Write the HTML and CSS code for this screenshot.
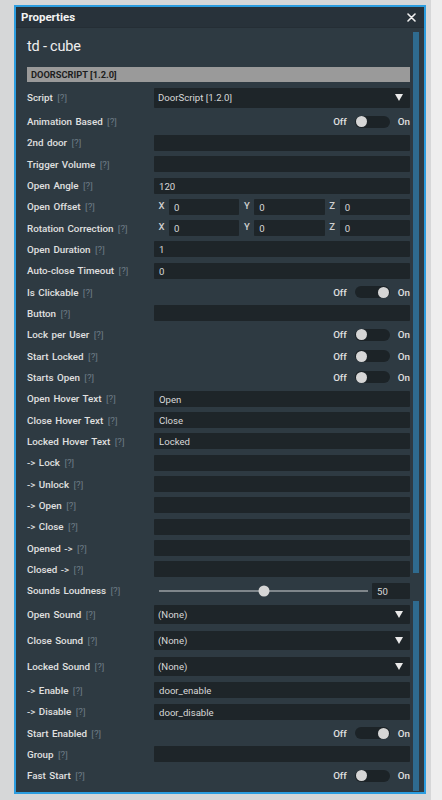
FILE: index.html
```html
<!DOCTYPE html>
<html>
<head>
<meta charset="utf-8">
<link rel="stylesheet" href="styles.css">
</head>
<body>
<div class="stage">
  <div class="window">
    <div class="titlebar">
      <span class="title">Properties</span>
      <svg class="close" width="9" height="9" viewBox="0 0 9 9"><path d="M1 1 L8 8 M8 1 L1 8" stroke="#f0f0f0" stroke-width="1.6" stroke-linecap="round"/></svg>
    </div>
    <div class="body">
      <div class="content">
        <div class="entity">td - cube</div>
        <div class="section">DOORSCRIPT [1.2.0]</div>
        <div class="rows">
          <div class="row tall"><div class="label">Script <span class="q">[?]</span></div><div class="select"><span>DoorScript [1.2.0]</span><svg width="8" height="7" viewBox="0 0 8 7"><path d="M0 0 H8 L4 7 Z" fill="#eaeaea"/></svg></div></div>
          <div class="row"><div class="label">Animation Based <span class="q">[?]</span></div><div class="toggle"><span>Off</span><div class="track"><div class="knob"></div></div><span>On</span></div></div>
          <div class="row"><div class="label">2nd door <span class="q">[?]</span></div><div class="input"></div></div>
          <div class="row"><div class="label">Trigger Volume <span class="q">[?]</span></div><div class="input"></div></div>
          <div class="row"><div class="label">Open Angle <span class="q">[?]</span></div><div class="input">120</div></div>
          <div class="row"><div class="label">Open Offset <span class="q">[?]</span></div><div class="xyz"><span class="axis">X</span><div class="input">0</div><span class="axis">Y</span><div class="input">0</div><span class="axis">Z</span><div class="input">0</div></div></div>
          <div class="row"><div class="label">Rotation Correction <span class="q">[?]</span></div><div class="xyz"><span class="axis">X</span><div class="input">0</div><span class="axis">Y</span><div class="input">0</div><span class="axis">Z</span><div class="input">0</div></div></div>
          <div class="row"><div class="label">Open Duration <span class="q">[?]</span></div><div class="input">1</div></div>
          <div class="row"><div class="label">Auto-close Timeout <span class="q">[?]</span></div><div class="input">0</div></div>
          <div class="row"><div class="label">Is Clickable <span class="q">[?]</span></div><div class="toggle"><span>Off</span><div class="track on"><div class="knob"></div></div><span>On</span></div></div>
          <div class="row"><div class="label">Button <span class="q">[?]</span></div><div class="input"></div></div>
          <div class="row"><div class="label">Lock per User <span class="q">[?]</span></div><div class="toggle"><span>Off</span><div class="track"><div class="knob"></div></div><span>On</span></div></div>
          <div class="row"><div class="label">Start Locked <span class="q">[?]</span></div><div class="toggle"><span>Off</span><div class="track"><div class="knob"></div></div><span>On</span></div></div>
          <div class="row"><div class="label">Starts Open <span class="q">[?]</span></div><div class="toggle"><span>Off</span><div class="track"><div class="knob"></div></div><span>On</span></div></div>
          <div class="row"><div class="label">Open Hover Text <span class="q">[?]</span></div><div class="input">Open</div></div>
          <div class="row"><div class="label">Close Hover Text <span class="q">[?]</span></div><div class="input">Close</div></div>
          <div class="row"><div class="label">Locked Hover Text <span class="q">[?]</span></div><div class="input">Locked</div></div>
          <div class="row"><div class="label">-&gt; Lock <span class="q">[?]</span></div><div class="input"></div></div>
          <div class="row"><div class="label">-&gt; Unlock <span class="q">[?]</span></div><div class="input"></div></div>
          <div class="row"><div class="label">-&gt; Open <span class="q">[?]</span></div><div class="input"></div></div>
          <div class="row"><div class="label">-&gt; Close <span class="q">[?]</span></div><div class="input"></div></div>
          <div class="row"><div class="label">Opened -&gt; <span class="q">[?]</span></div><div class="input"></div></div>
          <div class="row"><div class="label">Closed -&gt; <span class="q">[?]</span></div><div class="input"></div></div>
          <div class="row"><div class="label">Sounds Loudness <span class="q">[?]</span></div><div class="slider"><div class="rail"><div class="thumb" style="left:50%"></div></div><div class="input">50</div></div></div>
          <div class="row tall"><div class="label">Open Sound <span class="q">[?]</span></div><div class="select"><span>(None)</span><svg width="8" height="7" viewBox="0 0 8 7"><path d="M0 0 H8 L4 7 Z" fill="#eaeaea"/></svg></div></div>
          <div class="row tall"><div class="label">Close Sound <span class="q">[?]</span></div><div class="select"><span>(None)</span><svg width="8" height="7" viewBox="0 0 8 7"><path d="M0 0 H8 L4 7 Z" fill="#eaeaea"/></svg></div></div>
          <div class="row tall"><div class="label">Locked Sound <span class="q">[?]</span></div><div class="select"><span>(None)</span><svg width="8" height="7" viewBox="0 0 8 7"><path d="M0 0 H8 L4 7 Z" fill="#eaeaea"/></svg></div></div>
          <div class="row"><div class="label">-&gt; Enable <span class="q">[?]</span></div><div class="input">door_enable</div></div>
          <div class="row"><div class="label">-&gt; Disable <span class="q">[?]</span></div><div class="input">door_disable</div></div>
          <div class="row"><div class="label">Start Enabled <span class="q">[?]</span></div><div class="toggle"><span>Off</span><div class="track on"><div class="knob"></div></div><span>On</span></div></div>
          <div class="row"><div class="label">Group <span class="q">[?]</span></div><div class="input"></div></div>
          <div class="row"><div class="label">Fast Start <span class="q">[?]</span></div><div class="toggle"><span>Off</span><div class="track"><div class="knob"></div></div><span>On</span></div></div>
        </div>
      </div>
      <div class="scrollbar">
        <div class="sthumb first"></div>
        <div class="sthumb second"></div>
      </div>
    </div>
  </div>
</div>
</body>
</html>
```
FILE: styles.css
```css
html, body {
  margin: 0;
  padding: 0;
}
body {
  background: linear-gradient(to right, #d6d7d8 431px, #eeeeee 431px);
  font-family: Roboto, "Noto Sans", sans-serif;
  height: 800px;
  overflow: hidden;
}
.stage {
  padding: 5px 0 0 14px;
}
.window {
  box-sizing: border-box;
  width: 412px;
  height: 789px;
  border: 2px solid #2c9ddf;
  background: #2e3a42;
  display: flex;
  flex-direction: column;
}
.titlebar {
  height: 20px;
  flex: none;
  background: #28323a;
  display: flex;
  align-items: center;
  justify-content: space-between;
  padding: 0 8px 0 5px;
  border-bottom: 1px solid #252e35;
}
.title {
  color: #f2f2f2;
  font-weight: 700;
  font-size: 11.5px;
}
.close {
  display: block;
}
.body {
  flex: 1;
  display: flex;
  min-height: 0;
}
.content {
  flex: 1;
  padding-left: 11px;
  min-width: 0;
}
.entity {
  margin-top: 9px;
  height: 20px;
  line-height: 20px;
  font-size: 14.5px;
  letter-spacing: -0.2px;
  color: #eeeeee;
}
.section {
  margin-top: 10px;
  height: 15px;
  line-height: 15px;
  background: #9a9a9a;
  color: #1e1e1e;
  font-size: 9.3px;
  font-weight: 700;
  padding-left: 4px;
}
.rows {
  margin-top: 5.4px;
  display: flex;
  flex-direction: column;
  gap: 5.33px;
}
.row {
  display: grid;
  grid-template-columns: 127px 1fr;
  align-items: center;
  height: 16px;
}
.row.tall {
  height: 20.8px;
}
.label {
  color: #e0e0e0;
  font-size: 9.8px;
  font-weight: 500;
  white-space: nowrap;
  word-spacing: 1px;
}
.q {
  color: #6d7b85;
  font-weight: 400;
  margin-left: 1px;
}
.input {
  height: 16px;
  line-height: 17px;
  background: #1e2529;
  color: #d8d8d8;
  font-size: 9.6px;
  padding-left: 5px;
  border-radius: 1px;
  white-space: nowrap;
  overflow: hidden;
}
.select {
  height: 19.5px;
  background: #1e2529;
  color: #d8d8d8;
  font-size: 9.6px;
  display: flex;
  align-items: center;
  justify-content: space-between;
  padding: 0 7px 0 4px;
  border-radius: 1px;
}
.select svg {
  display: block;
}
.toggle {
  display: flex;
  align-items: center;
  justify-content: flex-end;
  color: #e0e0e0;
  font-size: 9.8px;
  font-weight: 500;
}
.track {
  width: 35px;
  height: 12px;
  border-radius: 6px;
  background: #1c2327;
  margin: 0 8px;
  display: flex;
  align-items: center;
  justify-content: flex-start;
  padding: 0 1px;
  box-sizing: border-box;
}
.track.on {
  justify-content: flex-end;
}
.knob {
  width: 11px;
  height: 11px;
  border-radius: 50%;
  background: #d6d6d6;
}
.xyz {
  display: grid;
  grid-template-columns: 15px 1fr 15px 1fr 15px 1fr;
  align-items: center;
}
.axis {
  color: #cfcfcf;
  font-size: 9.5px;
  text-align: center;
  font-weight: 500;
  margin-top: -3px;
}
.slider {
  display: grid;
  grid-template-columns: 1fr 38px;
  align-items: center;
  gap: 4px;
}
.rail {
  position: relative;
  height: 2px;
  background: #7f868b;
  margin-left: 5px;
}
.thumb {
  position: absolute;
  top: 50%;
  width: 11px;
  height: 11px;
  border-radius: 50%;
  background: #d6d6d6;
  transform: translate(-50%, -50%);
}
.scrollbar {
  width: 6px;
  flex: none;
  margin: 0 5px 0 3px;
  display: flex;
  flex-direction: column;
}
.sthumb {
  background: #2f6b8f;
}
.sthumb.first {
  margin-top: 4px;
  height: 541px;
}
.sthumb.second {
  margin-top: 28px;
  flex: 1;
  margin-bottom: 1px;
}
```
